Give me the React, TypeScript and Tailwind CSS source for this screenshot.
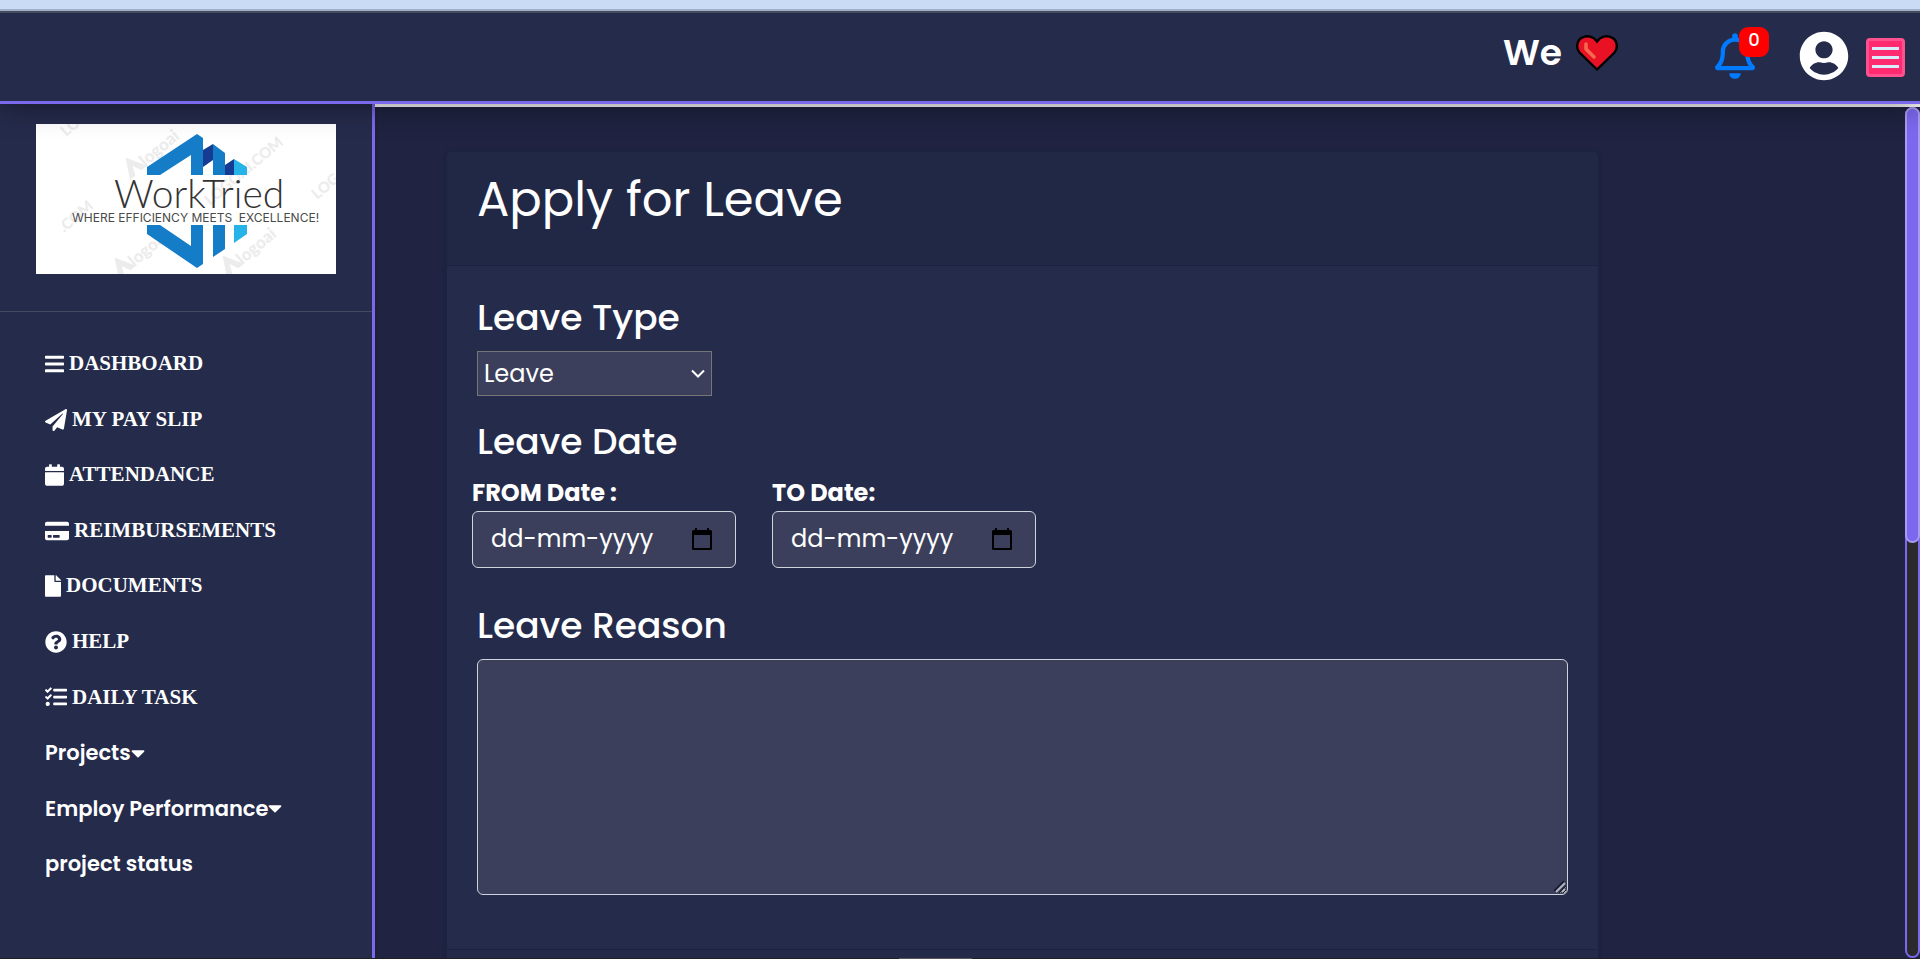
import type { ReactNode } from "react";
import {
  FaBars,
  FaCalendar,
  FaCaretDown,
  FaCreditCard,
  FaFile,
  FaPaperPlane,
  FaQuestionCircle,
  FaRegBell,
  FaTasks,
  FaUserCircle,
} from "react-icons/fa";

type NavItem = { label: string; icon?: ReactNode; caret?: boolean };

const navItems: NavItem[] = [
  { label: "DASHBOARD", icon: <FaBars className="h-[22px] w-[19px] shrink-0" /> },
  { label: "MY PAY SLIP", icon: <FaPaperPlane className="size-[22px] shrink-0" /> },
  { label: "ATTENDANCE", icon: <FaCalendar className="h-[22px] w-[19px] shrink-0" /> },
  { label: "REIMBURSEMENTS", icon: <FaCreditCard className="h-[22px] w-[24px] shrink-0" /> },
  { label: "DOCUMENTS", icon: <FaFile className="h-[22px] w-[16px] shrink-0" /> },
  { label: "HELP", icon: <FaQuestionCircle className="size-[22px] shrink-0" /> },
  { label: "DAILY TASK", icon: <FaTasks className="size-[22px] shrink-0" /> },
  { label: "Projects", caret: true },
  { label: "Employ Performance", caret: true },
  { label: "project status" },
];

function Watermark({ x, y, text, mark }: { x: number; y: number; text: string; mark?: boolean }) {
  return (
    <g transform={`translate(${x} ${y}) rotate(-40)`} fill="#ececec">
      {mark && <path d="M0 0 11 -20 22 0H15L11 -9 7 0Z" />}
      <text x={mark ? 20 : 0} y="0" fontFamily="Lato, sans-serif" fontWeight="900" fontSize={mark ? 17 : 15}>
        {text}
      </text>
    </g>
  );
}

function Logo() {
  return (
    <svg viewBox="0 0 300 150" className="block w-[300px] bg-white" role="img" aria-label="WorkTried">
      <Watermark x={30} y={13} text="LO" />
      <Watermark x={94} y={56} text="logoai" mark />
      <Watermark x={174} y={82} text="LOGOAI.COM" />
      <Watermark x={281} y={76} text="LOG" />
      <Watermark x={28} y={109} text=".COM" />
      <Watermark x={83} y={156} text="logoai" mark />
      <Watermark x={191} y={154} text="logoai" mark />
      <path fill="#157dc8" d="M111 51V43L161 10l6 4V51H155V31L124 51Z" />
      <path fill="#153c92" d="M167 26 177 20V36L167 43Z" />
      <path fill="#157dc8" d="M177 20 189 29V51H177Z" />
      <path fill="#153c92" d="M189 41 198 35V51H189Z" />
      <path fill="#25b3e8" d="M198 35 211 43V51H198Z" />
      <path fill="#157dc8" d="M111 101H124L155 122V101H167V140L161 144 111 110Z" />
      <path fill="#157dc8" d="M177 101H189V125L177 133Z" />
      <path fill="#25b3e8" d="M198 101H211V110L198 119Z" />
      <text x="78" y="84" fontFamily="Lato, sans-serif" fontWeight="300" fontSize="39" fill="#333">
        WorkTried
      </text>
      <text x="36" y="98" fontFamily="Inter, sans-serif" fontSize="12" fill="#4a4a4a">
        {"WHERE EFFICIENCY MEETS \u00a0EXCELLENCE!"}
      </text>
    </svg>
  );
}

function Heart() {
  return (
    <svg viewBox="0 0 42 37" className="w-[42px]" role="img" aria-label="love">
      <path
        d="M21 34.500 3.500 17.500C-.5 13 1 5 6 2.700 11-.2 17.500 1.500 21 6.500 24.500 1.500 31-.2 36 2.700 41 5 42.500 13 38.500 17.500Z"
        fill="#e81224"
        stroke="#000"
        strokeWidth="2.400"
      />
      <path d="M10 9V14L18 22" fill="none" stroke="#f4694f" strokeWidth="3.500" strokeLinecap="round" strokeLinejoin="round" />
    </svg>
  );
}

function TopBar() {
  return (
    <header className="relative z-10 flex h-[91px] shrink-0 items-center justify-end border-b-[3px] border-[#7b68ee] bg-[#252b4b] pr-[15px] shadow-[0_0_30px_rgba(0,0,0,0.5)]">
      <div className="mr-[97px] flex items-center gap-[14px] pb-[8px]">
        <span className="text-[36px] leading-[40px] font-semibold">We</span>
        <Heart />
      </div>
      <button type="button" aria-label="Notifications" className="relative mr-[44px] pb-[3px] text-[#007bff]">
        <FaRegBell className="h-[46px] w-[40px]" />
        <span className="absolute -top-[6px] left-[24px] flex size-[30px] items-center justify-center rounded-[9px] bg-[#ff0000] pb-[3px] text-[18px] leading-[20px] font-medium text-white">
          0
        </span>
      </button>
      <button type="button" aria-label="Account" className="mr-[17px] pb-[2px]">
        <FaUserCircle className="size-[50px]" />
      </button>
      <button
        type="button"
        aria-label="Menu"
        className="flex size-[39px] flex-col items-center justify-center gap-[6px] rounded-[4px] border-[3px] border-[#ff5190] bg-[#ff2a70]"
      >
        <span className="h-[3px] w-[27px] bg-[#d9ecfb]" />
        <span className="h-[3px] w-[27px] bg-[#d9ecfb]" />
        <span className="h-[3px] w-[27px] bg-[#d9ecfb]" />
      </button>
    </header>
  );
}

function Sidebar() {
  return (
    <aside className="w-[375px] shrink-0 overflow-hidden border-r-[3px] border-[#7b68ee] bg-[#252b4b]">
      <div className="flex justify-center border-b border-[#444962] pt-[20px] pb-[37px]">
        <Logo />
      </div>
      <nav aria-label="Main" className="px-[45px] pt-[38px]">
        <ul className="flex h-[528px] flex-col justify-between">
          {navItems.map((item) => (
            <li key={item.label}>
              <a
                href="#"
                className={
                  item.icon
                    ? "flex h-[28px] items-center gap-[5px] font-['Liberation_Serif',serif] text-[21px] font-bold"
                    : "flex h-[28px] items-center text-[21px] font-semibold"
                }
              >
                {item.icon}
                <span>{item.label}</span>
                {item.caret && <FaCaretDown className="h-[22px] w-[14px] shrink-0" />}
              </a>
            </li>
          ))}
        </ul>
      </nav>
    </aside>
  );
}

function DateField({ id, label }: { id: string; label: string }) {
  return (
    <div className="w-[264px]">
      <label htmlFor={id} className="block text-[24px] leading-[36px] font-bold">
        {label}
      </label>
      <div className="flex h-[57px] items-center rounded-[6px] border border-[#ced4da] bg-[#3c3f5c] pr-[23px] pb-[2px] pl-[18px]">
        <input
          id={id}
          type="text"
          placeholder="dd-mm-yyyy"
          className="w-full min-w-0 bg-transparent text-[24px] leading-[36px] text-white outline-none placeholder:text-white"
        />
        <button type="button" aria-label={`Pick ${label}`} className="shrink-0 text-black">
          <svg viewBox="0 0 20 22" className="h-[22px] w-[20px]" fill="currentColor">
            <path d="M3 0h2v2h10V0h2v2h1.500A1.500 1.500 0 0 1 20 3.500v17a1.500 1.500 0 0 1-1.500 1.500h-17A1.500 1.500 0 0 1 0 20.500v-17A1.500 1.500 0 0 1 1.500 2H3ZM2 7v13h16V7Z" />
          </svg>
        </button>
      </div>
    </div>
  );
}

function LeaveForm() {
  return (
    <form className="mt-[44px] mr-[20%] ml-[71px] rounded-[6px] border border-[#1c2340] bg-[#252b4b] shadow-[0_0_3px_1px_#1c2340]">
      <div className="h-[114px] rounded-t-[6px] border-b border-[#1c2340] bg-[#212845] px-[30px] pt-[19px]">
        <h1 className="text-[48px] leading-[58px] font-normal">Apply for Leave</h1>
      </div>
      <div className="flex flex-col px-[30px] pt-[30px] pb-[54px]">
        <label htmlFor="leave-type" className="text-[36px] leading-[44px] font-medium">
          Leave Type
        </label>
        <div className="relative mt-[11px] w-[235px]">
          <select
            id="leave-type"
            className="h-[45px] w-full appearance-none border border-[#767676] bg-[#3c3f5c] pl-[6px] text-[24px] text-white"
          >
            <option>Leave</option>
          </select>
          <svg viewBox="0 0 14 9" className="pointer-events-none absolute top-[18px] right-[7px] h-[9px] w-[14px]" fill="none" stroke="#fff" strokeWidth="2">
            <path d="M1 1.500 7 7.500 13 1.500" />
          </svg>
        </div>
        <h2 className="mt-[24px] text-[36px] leading-[44px] font-medium">Leave Date</h2>
        <div className="-ml-[5px] flex gap-[36px] pt-[11px]">
          <DateField id="from-date" label="FROM Date :" />
          <DateField id="to-date" label="TO Date:" />
        </div>
        <label htmlFor="reason" className="mt-[36px] text-[36px] leading-[44px] font-medium">
          Leave Reason
        </label>
        <div className="relative mt-[11px]">
          <textarea
            id="reason"
            className="block h-[236px] w-full resize rounded-[6px] border border-[#ced4da] bg-[#3c3f5c] p-[12px] text-[24px] text-white"
          />
          <svg viewBox="0 0 13 13" className="pointer-events-none absolute right-[2px] bottom-[2px] size-[13px]" fill="none">
            <path d="M1 11 11 1M7 12 12 7" stroke="#16182a" strokeWidth="1.500" />
            <path d="M3 12 12 3M9 12 12 9" stroke="#b4b6c4" strokeWidth="1.800" />
          </svg>
        </div>
      </div>
      <div className="h-[90px] border-t border-[#1c2340] bg-[#242a4a]" />
    </form>
  );
}

export default function App() {
  return (
    <div className="flex h-screen flex-col bg-[#202341] font-['Poppins','Inter',sans-serif] text-white">
      <div className="relative z-20 h-[13px] shrink-0 border-b-2 border-[#444c5f] bg-[#9fafc8]">
        <div className="h-[9px] bg-[#c9dbf5]" />
      </div>
      <TopBar />
      <div className="flex min-h-0 flex-1">
        <Sidebar />
        <div className="flex min-w-0 flex-1 border-t-[3px] border-white">
          <main className="min-w-0 flex-1 overflow-hidden border-l-[3px] border-[#1f2237]">
            <div className="-ml-[3px]">
              <LeaveForm />
            </div>
          </main>
          <div className="w-[15px] shrink-0 rounded-[8px] border-2 border-[#7b68ee] bg-[#2b2b2b]" aria-hidden="true">
            <div className="-mx-[2px] -mt-[2px] h-[436px] rounded-[8px] border-2 border-[#a89bf3] bg-[#7b68ee]" />
          </div>
        </div>
      </div>
      <div className="flex h-px shrink-0 justify-center bg-[#202020]">
        <div className="-ml-[49px] w-[73px] bg-[#5a5557]" />
      </div>
    </div>
  );
}
